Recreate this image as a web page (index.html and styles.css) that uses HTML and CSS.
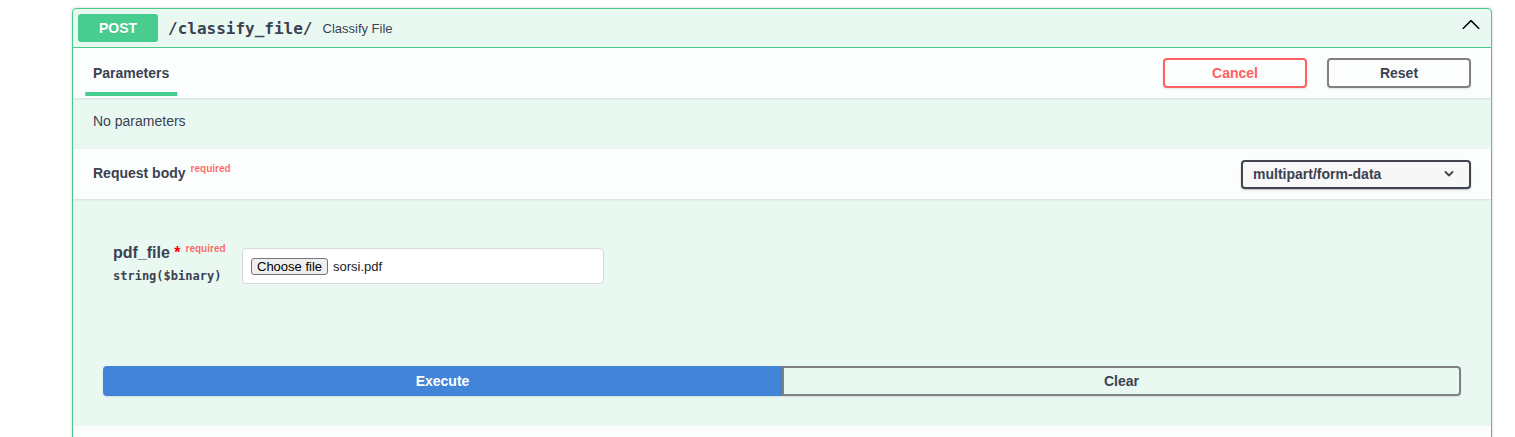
FILE: index.html
```html
<!DOCTYPE html>
<html lang="en">
<head>
<meta charset="utf-8">
<title>Swagger UI - classify_file</title>
<link rel="stylesheet" href="styles.css">
</head>
<body>
<div class="page">
  <div class="opblock">
    <div class="summary">
      <span class="method">POST</span>
      <span class="path">/classify_file/</span>
      <span class="summary-desc">Classify File</span>
      <svg class="arrow" width="20" height="20" viewBox="0 0 20 20" aria-hidden="true"><path d="M 17.418 14.908 C 17.69 15.176 18.127 15.176 18.397 14.908 C 18.667 14.64 18.668 14.207 18.397 13.939 L 10.489 6.109 C 10.219 5.841 9.782 5.841 9.51 6.109 L 1.602 13.939 C 1.332 14.207 1.332 14.64 1.602 14.908 C 1.873 15.176 2.311 15.176 2.581 14.908 L 10 7.767 L 17.418 14.908 Z"/></svg>
    </div>
    <div class="op-body">
      <div class="section-header">
        <div class="tab"><h4><span>Parameters</span></h4></div>
        <div class="try-out">
          <button class="btn cancel">Cancel</button>
          <button class="btn reset">Reset</button>
        </div>
      </div>
      <div class="desc-wrap"><p>No parameters</p></div>
      <div class="section-header">
        <h4 class="title required">Request body</h4>
        <div class="select">
          <span>multipart/form-data</span>
          <svg width="10" height="6" viewBox="0 0 10 6" aria-hidden="true"><polyline points="1.5,1 5,4.5 8.5,1" fill="none" stroke="#41444e" stroke-width="1.8" stroke-linecap="round" stroke-linejoin="round"/></svg>
        </div>
      </div>
      <div class="req-body">
        <div class="param-row">
          <div class="param-col">
            <div class="param-name required">pdf_file<span>&nbsp;*</span></div>
            <div class="param-type">string($binary)</div>
          </div>
          <div class="file-input">
            <button class="file-btn">Choose file</button>
            <span class="file-name">sorsi.pdf</span>
          </div>
        </div>
      </div>
      <div class="btn-group">
        <button class="btn execute">Execute</button>
        <button class="btn clear">Clear</button>
      </div>
      <div class="section-header responses"></div>
    </div>
  </div>
</div>
</body>
</html>
```
FILE: styles.css
```css
* { box-sizing: border-box; }

body {
  margin: 0;
  font-family: "Liberation Sans", Arial, sans-serif;
  color: #3b4151;
  background: #fff;
}

.page {
  padding: 8px 0 0 72px;
}

.opblock {
  width: 1420px;
  border: 1px solid #49cc90;
  border-radius: 4px;
  background: rgba(73, 204, 144, 0.12);
  box-shadow: 0 0 3px rgba(0, 0, 0, 0.19);
}

.summary {
  display: flex;
  align-items: center;
  padding: 5px;
  border-bottom: 1px solid #49cc90;
}

.method {
  width: 80px;
  height: 28px;
  display: flex;
  align-items: center;
  justify-content: center;
  background: #49cc90;
  color: #fff;
  font-size: 14px;
  font-weight: 700;
  border-radius: 3px;
  text-shadow: 0 1px 0 rgba(0, 0, 0, 0.1);
}

.path {
  font-family: "DejaVu Sans Mono", monospace;
  font-size: 16px;
  font-weight: 700;
  padding-left: 10px;
  margin-right: 10px;
}

.summary-desc {
  font-size: 13px;
}

.arrow {
  margin-left: auto;
  margin-right: 5px;
  align-self: flex-start;
  fill: #000;
}

.section-header {
  display: flex;
  align-items: center;
  min-height: 50px;
  padding: 8px 20px;
  background: rgba(255, 255, 255, 0.8);
  box-shadow: 0 1px 2px rgba(0, 0, 0, 0.1);
  position: relative;
}

.tab h4 {
  margin: 0;
  font-size: 14px;
  font-weight: 700;
}

.tab span {
  position: relative;
  display: inline-block;
  line-height: 16px;
}

.tab span::after {
  content: "";
  position: absolute;
  left: 50%;
  bottom: -15px;
  transform: translateX(-50%);
  width: 120%;
  height: 4px;
  background: #49cc90;
}

.try-out {
  margin-left: auto;
  display: flex;
  gap: 20px;
}

.btn {
  font-family: "Liberation Sans", Arial, sans-serif;
  font-size: 14px;
  font-weight: 700;
  height: 30px;
  padding: 0 23px;
  border: 2px solid #808080;
  border-radius: 4px;
  background: transparent;
  color: #3b4151;
  box-shadow: 0 1px 2px rgba(0, 0, 0, 0.1);
}

.try-out .btn {
  width: 144px;
}

.btn.cancel {
  border-color: #ff6060;
  color: #ff6060;
}

.desc-wrap {
  padding: 13px 20px 18px;
}

.desc-wrap p {
  margin: 0;
  font-size: 14px;
  line-height: 20px;
}

.title {
  margin: 0;
  font-size: 14px;
  font-weight: 700;
  line-height: 16px;
}

.required::after {
  content: "required";
  color: rgba(255, 0, 0, 0.6);
  font-size: 10px;
  font-weight: 700;
  padding: 5px;
  position: relative;
  top: -6px;
}

.select {
  margin-left: auto;
  width: 230px;
  height: 29px;
  display: flex;
  align-items: center;
  justify-content: space-between;
  padding: 0 15px 0 10px;
  background: #f7f7f7;
  border: 2px solid #41444e;
  border-radius: 4px;
  box-shadow: 0 1px 2px 0 rgba(0, 0, 0, 0.25);
  font-size: 14px;
  font-weight: 700;
}

.req-body {
  padding: 45px 20px 48px 40px;
}

.param-row {
  display: flex;
  align-items: flex-start;
}

.param-col {
  width: 129px;
}

.param-name {
  font-size: 16px;
  font-weight: 700;
  line-height: 18px;
}

.param-name span {
  color: red;
}

.param-type {
  font-family: "DejaVu Sans Mono", monospace;
  font-size: 12px;
  font-weight: 700;
  line-height: 14px;
  padding: 5px 0;
}

.file-input {
  width: 362px;
  height: 36px;
  margin-top: 4px;
  display: flex;
  align-items: center;
  padding: 0 10px 0 8px;
  background: #fff;
  border: 1px solid #d9d9d9;
  border-radius: 4px;
}

.file-btn {
  height: 17px;
  padding: 0 5px;
  font-family: "Liberation Sans", Arial, sans-serif;
  font-size: 13px;
  line-height: 15px;
  color: #000;
  background: #efefef;
  border: 1px solid #767676;
  border-radius: 3px;
}

.file-name {
  margin-left: 5px;
  font-size: 13px;
  color: #222;
}

.btn-group {
  display: flex;
  padding: 30px;
}

.btn-group .btn {
  flex: 1;
}

.btn.execute {
  background: #4184d8;
  border-color: #4184d8;
  color: #fff;
  border-radius: 4px 0 0 4px;
}

.btn.clear {
  border-radius: 0 4px 4px 0;
}
```
